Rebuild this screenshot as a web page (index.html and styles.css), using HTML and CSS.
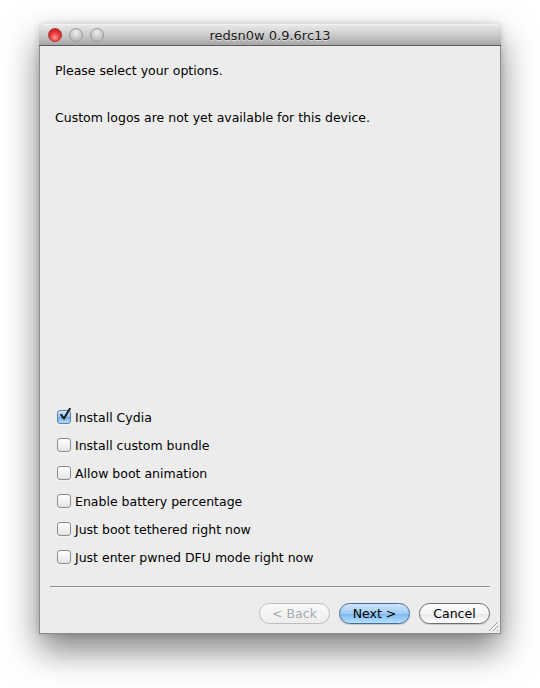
FILE: index.html
```html
<html lang="en">

<head>
    <title>redsn0w 0.9.6rc13</title>
    <link rel="stylesheet" href="styles.css">
</head>

<body>
    <div class="window">
        <div class="titlebar">
            <div class="lights">
                <span class="light close"></span>
                <span class="light"></span>
                <span class="light"></span>
            </div>
            <div class="title">redsn0w 0.9.6rc13</div>
        </div>

        <div class="content">
            <p class="intro">Please select your options.</p>
            <p class="note">Custom logos are not yet available for this device.</p>

            <div class="options">
                <label class="option">
                    <span class="box checked">
                        <svg width="14" height="14" viewBox="0 0 14 14">
                            <path d="M3.2 6.8 L6 10.6 L11.8 0.8" fill="none" stroke="#1c1c1c" stroke-width="2" stroke-linecap="round" stroke-linejoin="round" />
                        </svg>
                    </span>
                    Install Cydia
                </label>
                <label class="option"><span class="box"></span>Install custom bundle</label>
                <label class="option"><span class="box"></span>Allow boot animation</label>
                <label class="option"><span class="box"></span>Enable battery percentage</label>
                <label class="option"><span class="box"></span>Just boot tethered right now</label>
                <label class="option"><span class="box"></span>Just enter pwned DFU mode right now</label>
            </div>

            <div class="separator"></div>

            <div class="buttons">
                <button class="btn disabled">&lt; Back</button>
                <button class="btn default">Next &gt;</button>
                <button class="btn">Cancel</button>
            </div>
        </div>

        <svg class="grip" width="12" height="12" viewBox="0 0 12 12">
            <path d="M11 2 L2 11 M11 6 L6 11 M11 10 L10 11" stroke="#9a9a9a" stroke-width="1" />
            <path d="M11 3 L3 11 M11 7 L7 11" stroke="#ffffff" stroke-width="1" />
        </svg>
    </div>
</body>
</html>
```

FILE: styles.css
```css
html,
body {
    padding: 0;
    margin: 0;
    background: #ffffff;
}

* {
    box-sizing: border-box;
}

body {
    font-family: "DejaVu Sans", "Liberation Sans", sans-serif;
    font-size: 12.5px;
    color: #000;
}

.window {
    position: relative;
    margin: 24px 0 0 39px;
    width: 462px;
    height: 610px;
    background: #ececec;
    border: 1px solid #8c8c8c;
    border-top: 0;
    border-radius: 5px 5px 0 0;
    box-shadow: 0 16px 34px rgba(0, 0, 0, 0.5), 0 0 6px rgba(0, 0, 0, 0.15);
    display: flex;
    flex-direction: column;
}

.titlebar {
    height: 22px;
    margin: 0 -1px;
    border-radius: 5px 5px 0 0;
    background: linear-gradient(#e9e9e9, #c8c8c8 55%, #a6a6a6);
    border-bottom: 1px solid #5c5c5c;
    border-top: 1px solid #f2f2f2;
    display: flex;
    align-items: center;
    position: relative;
}

.lights {
    display: flex;
    gap: 7px;
    padding-left: 9px;
}

.light {
    width: 14px;
    height: 14px;
    border-radius: 50%;
    border: 1px solid #9a9a9a;
    background: radial-gradient(circle at 50% 30%, #f0f0f0, #c4c4c4 60%, #b2b2b2);
}

.light.close {
    border-color: #b03535;
    background: radial-gradient(circle at 50% 70%, #ff9a9a, #e83a3a 45%, #b81818);
}

.title {
    position: absolute;
    left: 0;
    right: 0;
    text-align: center;
    font-size: 13px;
    color: #1a1a1a;
    text-shadow: 0 1px 0 rgba(255, 255, 255, 0.5);
}

.content {
    flex: 1;
    display: flex;
    flex-direction: column;
    padding: 17px 10px 9px 15px;
}

.intro,
.note {
    margin: 0;
    line-height: 16px;
}

.note {
    margin-top: 31px;
}

.options {
    margin-top: auto;
    display: flex;
    flex-direction: column;
    gap: 12px;
    padding-left: 2px;
    margin-bottom: 21px;
}

.option {
    display: flex;
    align-items: center;
    height: 16px;
}

.box {
    width: 14px;
    height: 14px;
    border: 1px solid #8e8e8e;
    border-radius: 3px;
    background: linear-gradient(#ffffff, #e4e4e4);
    margin-right: 4px;
    position: relative;
    box-shadow: 0 1px 0 rgba(255, 255, 255, 0.6);
}

.box.checked {
    border-color: #5a7fa8;
    background: linear-gradient(#d6eafc, #8fc1ee 50%, #6ea9e2 51%, #b6dcf8);
}

.box svg {
    position: absolute;
    left: 0;
    top: -3px;
}

.separator {
    margin: 0 0 15px -5px;
    border-bottom: 1px solid #f6f6f6;
    height: 2px;
    background: #8f8f8f;
    background-clip: content-box;
}

.buttons {
    display: flex;
    justify-content: flex-end;
    gap: 9px;
}

.btn {
    width: 71px;
    height: 21px;
    border-radius: 11px;
    border: 1px solid #6e6e6e;
    background: linear-gradient(#ffffff, #f3f3f3 50%, #e6e6e6 51%, #ffffff);
    font-family: "DejaVu Sans", "Liberation Sans", sans-serif;
    font-size: 12.5px;
    color: #000;
    padding: 0;
    box-shadow: 0 1px 1px rgba(0, 0, 0, 0.15);
}

.btn.default {
    border-color: #4a6a9a;
    background: linear-gradient(#cfe6fb, #9fcbf3 50%, #7ab6ee 51%, #b7e0fd);
}

.btn.disabled {
    border-color: #bdbdbd;
    color: #a8a8a8;
    background: linear-gradient(#fafafa, #ededed);
    box-shadow: none;
}

.grip {
    position: absolute;
    right: 1px;
    bottom: 1px;
}
```
